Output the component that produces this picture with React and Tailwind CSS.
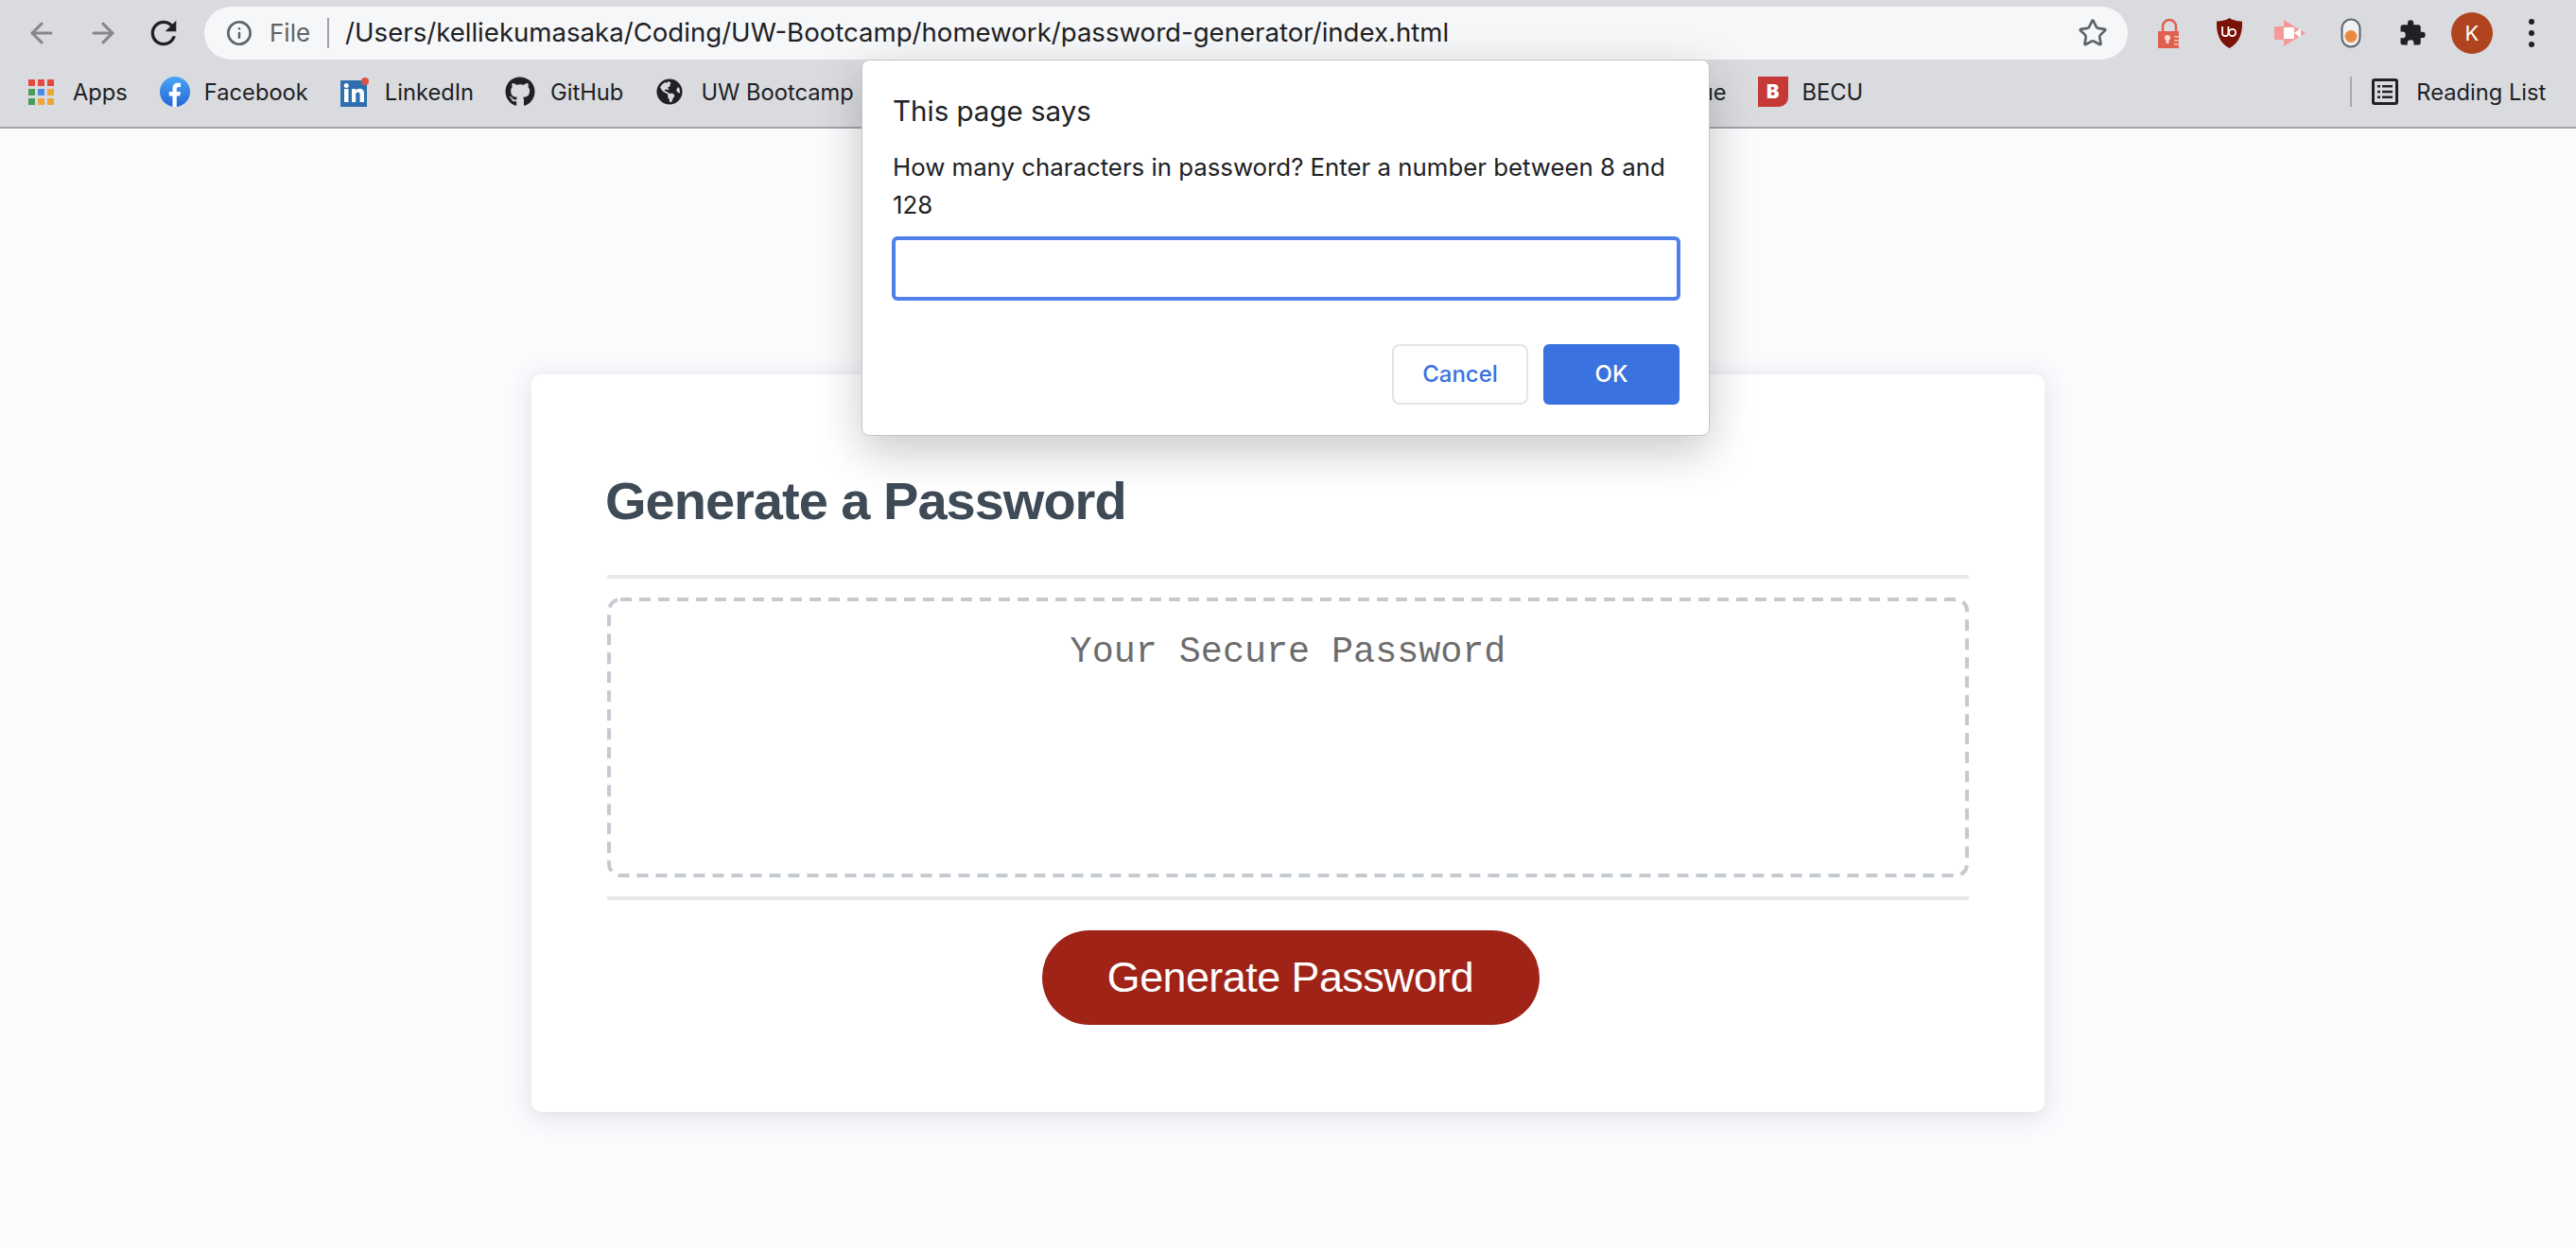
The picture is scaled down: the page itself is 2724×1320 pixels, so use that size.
import { ArrowLeft, ArrowRight, Info, Star } from 'lucide-react'
import { FaGithub, FaGlobeAmericas } from 'react-icons/fa'

const appColors = ['#e5483e', '#e5483e', '#e5483e', '#4b9c5c', '#4a8be8', '#eca63a', '#4b9c5c', '#eca63a', '#eca63a']

function AppsIcon() {
  return (
    <div className="grid grid-cols-3 gap-[3px] w-[27px] h-[27px]">
      {appColors.map((c, i) => (
        <svg key={i} width="7" height="7" viewBox="0 0 7 7"><rect width="7" height="7" fill={c} /></svg>
      ))}
    </div>
  )
}

function ReloadIcon() {
  return (
    <svg width="40" height="40" viewBox="0 0 24 24" fill="#202124">
      <path d="M17.65 6.35A7.958 7.958 0 0 0 12 4c-4.420 0-7.990 3.580-7.990 8s3.570 8 7.990 8c3.730 0 6.840-2.550 7.730-6h-2.080A5.990 5.990 0 0 1 12 18c-3.310 0-6-2.690-6-6s2.690-6 6-6c1.660 0 3.140.69 4.220 1.780L13 11h7V4l-2.350 2.350z" />
    </svg>
  )
}

function FacebookIcon() {
  return (
    <svg width="32" height="32" viewBox="0 0 32 32">
      <defs>
        <linearGradient id="fb" x1="0" y1="0" x2="0" y2="1">
          <stop offset="0" stopColor="#4aa5f5" />
          <stop offset="1" stopColor="#2566d8" />
        </linearGradient>
      </defs>
      <circle cx="16" cy="16" r="16" fill="url(#fb)" />
      <path d="M13.500 32V20.500H9.800v-4.600h3.700v-3.300c0-3.800 2.200-5.800 5.600-5.800 1.600 0 3 .2 3 .2v3.900h-1.900c-1.900 0-2.400 1.100-2.400 2.300v2.700h4.200l-.7 4.600h-3.500V32z" fill="#fff" />
    </svg>
  )
}

function LinkedInIcon() {
  return (
    <svg width="30" height="32" viewBox="0 0 30 32">
      <rect x="0" y="4" width="28" height="28" fill="#2f6fb0" />
      <rect x="4" y="13" width="4.500" height="14" fill="#fff" />
      <circle cx="6.200" cy="9.600" r="2.500" fill="#fff" />
      <path d="M12 13h4.200v2c.8-1.400 2.200-2.300 4.200-2.300 3.400 0 4.600 2.200 4.600 5.600V27h-4.400v-7.600c0-1.700-.5-3-2.200-3s-2.200 1.300-2.200 3V27H12z" fill="#fff" />
      <circle cx="26" cy="5" r="4" fill="#d9534a" />
    </svg>
  )
}

function LockIcon() {
  return (
    <svg width="24" height="32" viewBox="0 0 24 32">
      <path d="M5 15V9a7 7 0 0 1 14 0v6" fill="none" stroke="#e0604f" strokeWidth="2.500" />
      <rect x="0" y="14" width="20" height="18" fill="#e0604f" />
      <rect x="20" y="14" width="2" height="18" fill="#e0604f" />
      <circle cx="10" cy="21" r="3" fill="#f8d9d3" />
      <rect x="8.500" y="22" width="3" height="5" fill="#f8d9d3" />
      <rect x="17" y="19" width="5" height="1.500" fill="#f3c4bb" />
      <rect x="17" y="23" width="5" height="1.500" fill="#f3c4bb" />
      <rect x="17" y="27" width="5" height="1.500" fill="#f3c4bb" />
    </svg>
  )
}

function ShieldIcon() {
  return (
    <svg width="29" height="32" viewBox="0 0 29 32">
      <path d="M14.500 0C17 2 23 3.500 28 3.500c.5 13-3 23-13.500 28.500C4 26.500.5 16.500 1 3.500 6 3.500 12 2 14.500 0z" fill="#7a1208" />
      <path d="M7 9v7a3.200 3.200 0 0 0 6.400 0V9M14 15.500a3.600 3.600 0 1 0 7.200 0 3.600 3.600 0 1 0-7.200 0z" fill="none" stroke="#fff" strokeWidth="1.800" />
    </svg>
  )
}

function CameraIcon() {
  return (
    <svg width="33" height="28" viewBox="0 0 33 28">
      <path d="M0 7h10V0l23 14-23 14v-7H0z" fill="#f59a99" />
      <rect x="10" y="8" width="11" height="12" fill="#fff" />
      <path d="M21 14l7-5v10z" fill="#fff" />
    </svg>
  )
}

function PillIcon() {
  return (
    <svg width="22" height="32" viewBox="0 0 22 32">
      <rect x="1.500" y="1.500" width="19" height="29" rx="9.500" fill="#f0f1f3" stroke="#5f6368" strokeWidth="2" />
      <circle cx="11" cy="19.500" r="6.500" fill="#ea8a3f" />
    </svg>
  )
}

function PuzzleIcon() {
  return (
    <svg width="30" height="30" viewBox="0 0 24 24" fill="#202124">
      <path d="M20.500 11H19V7a2 2 0 0 0-2-2h-4V3.500a2.500 2.500 0 0 0-5 0V5H4a2 2 0 0 0-2 2v3.800h1.500a2.700 2.700 0 0 1 0 5.400H2V20a2 2 0 0 0 2 2h3.800v-1.500a2.700 2.700 0 0 1 5.400 0V22H17a2 2 0 0 0 2-2v-4h1.500a2.500 2.500 0 0 0 0-5z" />
    </svg>
  )
}

function ReadingListIcon() {
  return (
    <svg width="28" height="28" viewBox="0 0 28 28" fill="none">
      <rect x="1.500" y="1.500" width="25" height="25" rx="1.500" stroke="#202124" strokeWidth="3" />
      <rect x="6" y="7" width="3" height="2.500" fill="#202124" />
      <rect x="11" y="7" width="11" height="2.500" fill="#202124" />
      <rect x="6" y="12.800" width="3" height="2.500" fill="#202124" />
      <rect x="11" y="12.800" width="11" height="2.500" fill="#202124" />
      <rect x="6" y="18.500" width="3" height="2.500" fill="#202124" />
      <rect x="11" y="18.500" width="11" height="2.500" fill="#202124" />
    </svg>
  )
}

function Bookmark({ icon, label, className }) {
  return (
    <div className={`flex items-center shrink-0 ${className}`}>
      {icon}
      <span className="pt-[2px] text-[#202124] text-[23.7px] leading-none whitespace-nowrap">{label}</span>
    </div>
  )
}

function Toolbar() {
  return (
    <header className="h-[136px] bg-[#dadbdf] border-b-2 border-[#a3a4a7] font-['Inter',sans-serif]">
      <div className="h-[68px] flex items-center pt-[2px]">
        <ArrowLeft size={34} strokeWidth={2.2} className="ml-[27px] text-[#85878b]" />
        <ArrowRight size={34} strokeWidth={2.2} className="ml-[31px] text-[#85878b]" />
        <div className="ml-[27px]"><ReloadIcon /></div>
        <div className="ml-[23px] w-[2034px] h-[56px] rounded-full bg-[#f6f7f9] flex items-center">
          <Info size={28} strokeWidth={2.2} className="ml-[23px] text-[#5f6368]" />
          <span className="ml-[18px] text-[26px] leading-none text-[#5f6368]">File</span>
          <div className="ml-[18px] w-[2px] h-[32px] bg-[#a0a2a6]" />
          <span className="ml-[17px] text-[27.6px] leading-none text-[#202124] whitespace-nowrap">/Users/kelliekumasaka/Coding/UW-Bootcamp/homework/password-generator/index.html</span>
          <Star size={32} strokeWidth={2} className="ml-auto mr-[21px] text-[#5f6368]" />
        </div>
        <div className="ml-[32px]"><LockIcon /></div>
        <div className="ml-[37px]"><ShieldIcon /></div>
        <div className="ml-[33px]"><CameraIcon /></div>
        <div className="ml-[37px]"><PillIcon /></div>
        <div className="ml-[39px]"><PuzzleIcon /></div>
        <div className="ml-[26px] w-[44px] h-[44px] rounded-full bg-[#b0441f] text-white text-[22px] flex items-center justify-center">K</div>
        <div className="ml-[38px] flex flex-col gap-[6px]">
          <div className="w-[6px] h-[6px] rounded-full bg-[#202124]" />
          <div className="w-[6px] h-[6px] rounded-full bg-[#202124]" />
          <div className="w-[6px] h-[6px] rounded-full bg-[#202124]" />
        </div>
      </div>
      <div className="h-[58px] flex items-center pl-[30px]">
        <Bookmark icon={<AppsIcon />} label="Apps" className="gap-[20px]" />
        <Bookmark icon={<FacebookIcon />} label="Facebook" className="gap-[15px] ml-[34px]" />
        <Bookmark icon={<LinkedInIcon />} label="LinkedIn" className="gap-[17px] ml-[34px]" />
        <Bookmark icon={<FaGithub size={32} color="#202124" />} label="GitHub" className="gap-[16px] ml-[33px]" />
        <Bookmark icon={<FaGlobeAmericas size={28} color="#202124" />} label="UW Bootcamp" className="gap-[19px] ml-[35px]" />
        <span className="ml-[895px] pt-[2px] text-[#202124] text-[23.7px] leading-none">ue</span>
        <Bookmark
          icon={<div className="w-[32px] h-[32px] bg-[#c53a37] rounded-br-[10px] flex items-center justify-center text-white font-black text-[20px]">B</div>}
          label="BECU"
          className="gap-[15px] ml-[33px]"
        />
        <div className="ml-[515px] w-[2px] h-[32px] bg-[#a9aaae]" />
        <Bookmark icon={<ReadingListIcon />} label="Reading List" className="gap-[19px] ml-[21px]" />
      </div>
    </header>
  )
}

function Card() {
  return (
    <section className="mx-auto w-[1600px] h-[780px] mt-[260px] bg-white rounded-[10px] shadow-[0_4px_24px_rgba(60,70,90,0.16)] px-[80px] pt-[102px]">
      <h1 className="-ml-[2px] font-['Liberation_Sans',sans-serif] font-bold text-[56px] leading-[64px] tracking-[-1px] h-[110px] text-[#3e4a56]">Generate a Password</h1>
      <div className="h-[4px] bg-[#e6e8ea]" />
      <div className="relative mt-[20px] h-[296px] pt-[36px] text-center font-['Liberation_Mono',monospace] font-medium text-[38.4px] leading-[44px] text-[#6c6c6c]">
        <svg className="absolute inset-0 w-full h-full" fill="none">
          <rect x="2" y="2" width="1436" height="292" rx="12" stroke="#c5cad0" strokeWidth="4" strokeDasharray="12 8" />
        </svg>
        Your Secure Password
      </div>
      <div className="mt-[20px] h-[4px] bg-[#e6e8ea]" />
      <div className="mt-[32px] flex justify-center pl-[5px]">
        <button className="w-[526px] h-[100px] rounded-full bg-[#a02318] text-white font-['Liberation_Sans',sans-serif] text-[44.8px] tracking-[-0.5px]">Generate Password</button>
      </div>
    </section>
  )
}

function PromptDialog() {
  return (
    <div className="absolute left-[911px] top-[63px] w-[897px] h-[398px] bg-white rounded-[8px] border border-[#c4c5c8] shadow-[0_16px_48px_rgba(0,0,0,0.22)] pl-[32px] pr-[31px] pt-[33px] font-['Inter',sans-serif]">
      <p className="text-[29.5px] leading-[40px] text-[#202124]">This page says</p>
      <p className="mt-[20px] text-[25.8px] leading-[40px] text-[#202124]">How many characters in password? Enter a number between 8 and 128</p>
      <input className="block mt-[13px] -ml-[1px] w-[834px] h-[68px] rounded-[6px] border-4 border-[#4f80e9] outline-none" />
      <div className="mt-[46px] flex justify-end gap-[16px]">
        <button className="w-[144px] h-[64px] rounded-[8px] border-2 border-[#e3e4e7] bg-white text-[#3a72e0] text-[24px] font-medium">Cancel</button>
        <button className="w-[144px] h-[64px] rounded-[6px] bg-[#3a72e0] text-white text-[24px] font-medium">OK</button>
      </div>
    </div>
  )
}

export default function App() {
  return (
    <div className="relative w-[2724px] h-[1320px] overflow-hidden bg-[#fafbfd]">
      <Toolbar />
      <Card />
      <PromptDialog />
    </div>
  )
}
